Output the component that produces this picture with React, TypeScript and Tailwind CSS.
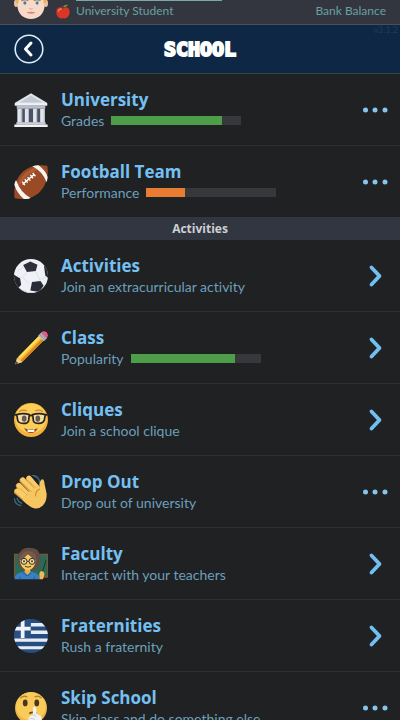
import type { ReactNode } from 'react';

function AvatarIcon() {
  return (
    <svg viewBox="0 0 100 100" className="w-[34px] h-[34px] shrink-0" aria-hidden="true">
      <ellipse cx="6" cy="54" rx="6" ry="11" fill="#eec0a6" />
      <ellipse cx="94" cy="54" rx="6" ry="11" fill="#eec0a6" />
      <path d="M7 30Q8 0 50 0T93 30L90 64Q84 99 50 100Q16 99 10 64Z" fill="#f8d9c8" />
      <path d="M5 50Q0 0 50 0T95 50L88 58Q86 38 80 24L20 24Q14 38 12 58Z" fill="#e3b45c" />
      <path d="M22 47Q32 40 42 46M58 46Q68 40 78 47" fill="none" stroke="#b98546" strokeWidth="4" />
      <ellipse cx="32" cy="53" rx="7" ry="5" fill="#fff" />
      <ellipse cx="68" cy="53" rx="7" ry="5" fill="#fff" />
      <circle cx="32" cy="53" r="5" fill="#4c7ba6" />
      <circle cx="68" cy="53" r="5" fill="#4c7ba6" />
      <path d="M45 69Q50 73 55 69" fill="none" stroke="#dba78e" strokeWidth="3" />
      <path d="M36 80Q50 77 64 80Q50 89 36 80Z" fill="#d98683" />
    </svg>
  );
}

function AppleIcon() {
  return (
    <svg viewBox="0 0 40 42" className="w-[14px] h-[15px] shrink-0" aria-hidden="true">
      <path d="M20 12C12 6 2 10 1 21C0 32 8 41 15 41Q20 39 25 41C32 41 40 31 39 21C38 10 28 6 20 12Z" fill="#da3527" />
      <path d="M7 20Q9 13 15 14" fill="none" stroke="#f5785f" strokeWidth="4" strokeLinecap="round" />
      <path d="M20 15Q20 8 17 3" fill="none" stroke="#6c4027" strokeWidth="3" />
      <path d="M20 8Q24 0 34 2Q30 10 20 8Z" fill="#6f9f35" />
    </svg>
  );
}

function BuildingIcon() {
  return (
    <svg viewBox="0 0 100 100" aria-hidden="true">
      <path d="M10 44H90V90H10Z" fill="#4c5264" />
      <path d="M3 29L50 1L97 29V37H3Z" fill="#dfe3ea" />
      <path d="M16 28L50 8L84 28Z" fill="#c3c8d3" />
      <path d="M2 30H98V37H2Z" fill="#f0f1f5" />
      <path d="M8 37H92V46H8Z" fill="#b7bdc9" />
      <path d="M10 46H24V87H10ZM32 46H44V87H32ZM56 46H68V87H56ZM77 46H91V87H77Z" fill="#e2e5ec" />
      <path d="M20 46H24V87H20ZM41 46H44V87H41ZM65 46H68V87H65ZM87 46H91V87H87Z" fill="#b4bac7" />
      <path d="M7 86H93V93H7Z" fill="#cdd1da" />
      <path d="M1 93H99V100H1Z" fill="#eff1f4" />
    </svg>
  );
}

function FootballIcon() {
  return (
    <svg viewBox="0 0 100 100" aria-hidden="true">
      <path d="M2 98C-3 65 7 38 27 19C47 1 75 -2 98 2C103 30 95 60 75 80C55 99 28 103 2 98Z" fill="#9a4a25" />
      <path d="M8 80C10 52 20 34 35 22C51 9 68 6 86 8C63 14 45 25 32 40C20 52 12 65 8 80Z" fill="#b05c33" />
      <path d="M54 4Q63 1 72 1Q94 17 99 36Q98 44 96 51Q84 19 54 4Z" fill="#f8f5f1" />
      <path d="M1 58Q2 50 6 44Q18 80 49 97Q39 101 29 100Q8 82 1 58Z" fill="#f8f5f1" />
      <path d="M25 57L60 27M24 49L32 59M32 42L40 52M40 36L48 46M48 29L56 39M55 23L63 33" fill="none" stroke="#fff" strokeWidth="4" />
    </svg>
  );
}

function SoccerIcon() {
  return (
    <svg viewBox="0 0 100 100" aria-hidden="true">
      <defs>
        <clipPath id="ball"><circle cx="50" cy="50" r="50" /></clipPath>
      </defs>
      <g clipPath="url(#ball)">
        <path d="M0 0H100V100H0Z" fill="#f0f1f7" />
        <path d="M40 36L26 54L44 72M63 34L76 60L57 72M24 54L10 55M76 60L98 52M48 70L62 84M28 24L10 35" fill="none" stroke="#d5d8e2" strokeWidth="2" />
        <path d="M27 18L48 7L69 17L64 35L38 38Z" fill="#2d2f3b" />
        <path d="M0 46L18 57L21 76L12 86L-8 70Z" fill="#22242e" />
        <path d="M53 68L78 65L87 79L74 97L48 93Z" fill="#292b37" />
        <path d="M88 19L102 28L106 62L92 48Z" fill="#252731" />
        <path d="M20 88Q43 101 69 97L60 103L20 102Z" fill="#cfd3df" />
      </g>
    </svg>
  );
}

function PencilIcon() {
  return (
    <svg viewBox="0 0 100 100" aria-hidden="true">
      <path d="M4 98L9 80L74 13L88 27L23 92Z" fill="#f9bd2e" />
      <path d="M13 76L78 10L83 15L18 81Z" fill="#ffdc62" />
      <path d="M19 87L83 22L88 27L23 92Z" fill="#da8521" />
      <path d="M9 80L4 98L23 92Q21 86 17 86Q15 80 9 80Z" fill="#f0cd99" />
      <path d="M7 89L4 98L13 95Z" fill="#45404a" />
      <path d="M71 14L81 4L98 20L88 30Z" fill="#b6bac1" />
      <path d="M75 10L92 26M79 7L95 23" stroke="#7f848c" strokeWidth="2" />
      <path d="M80 5Q87 -3 96 4Q103 12 96 21Z" fill="#e35c82" />
    </svg>
  );
}

function NerdIcon() {
  return (
    <svg viewBox="0 0 100 100" aria-hidden="true">
      <circle cx="50" cy="50" r="50" fill="#f3b03c" />
      <ellipse cx="50" cy="45" rx="46" ry="43" fill="#fbce55" />
      <path d="M16 25Q26 18 37 23M63 23Q74 18 84 25" fill="none" stroke="#c58a38" strokeWidth="3" strokeLinecap="round" />
      <path d="M9 35Q28 29 45 34L43 52Q40 61 27 60Q13 59 11 51ZM55 34Q73 29 91 35L89 51Q86 60 73 60Q60 60 57 52Z" fill="#f5dfa0" />
      <ellipse cx="30" cy="46" rx="7" ry="9" fill="#655b52" />
      <ellipse cx="70" cy="46" rx="7" ry="9" fill="#655b52" />
      <path d="M8 34Q28 29 45 34L43 52Q40 61 27 60Q13 59 11 51ZM55 34Q73 29 92 34L89 51Q86 60 73 60Q60 60 57 52ZM44 39Q50 34 56 39M2 35H10M98 35H90" fill="none" stroke="#292325" strokeWidth="5" />
      <path d="M30 74Q50 81 70 74Q64 88 50 88T30 74Z" fill="#8d4a26" />
      <path d="M40 77Q50 80 60 77V85H40Z" fill="#fff" />
    </svg>
  );
}

function WaveIcon() {
  return (
    <svg viewBox="0 0 100 100" aria-hidden="true">
      <path d="M14 32L50 69M8 49L42 78M25 16L58 52M44 11L68 40" fill="none" stroke="#d99a38" strokeWidth="17" strokeLinecap="round" />
      <path d="M15 31L50 67M10 47L42 76M26 14L59 50M44 9L69 38" fill="none" stroke="#f8cc6b" strokeWidth="14" strokeLinecap="round" />
      <path d="M26 66L66 29L76 40Q71 21 81 13Q89 11 90 27L96 55Q97 77 85 90Q74 101 59 98Q47 95 26 74Z" fill="#f6c661" />
      <path d="M18 39L40 60M29 27L52 50M47 20L63 38" fill="none" stroke="#d89c3c" strokeWidth="2" />
      <path d="M76 41Q61 48 64 63" fill="none" stroke="#c98a32" strokeWidth="3" />
      <path d="M60 2Q73 7 75 20M53 0Q59 1 63 5M1 70Q3 87 20 90M9 69Q12 79 22 83" fill="none" stroke="#326e8d" strokeWidth="4" strokeLinecap="round" />
    </svg>
  );
}

function TeacherIcon() {
  return (
    <svg viewBox="0 0 102 100" aria-hidden="true">
      <path d="M0 20H102V92H0Z" fill="#875332" />
      <path d="M3 23H99V88H3Z" fill="#276c57" />
      <path d="M12 50Q4 25 21 12Q31 0 50 3Q71 2 77 22Q84 40 74 63L58 71H26Z" fill="#654c43" />
      <path d="M1 97Q2 78 28 75L40 69L53 75Q76 78 78 97Z" fill="#397fc6" />
      <path d="M33 60H49V75L41 84L32 75Z" fill="#e5ad47" />
      <path d="M17 38Q28 31 42 22Q54 34 65 38Q64 66 42 70Q20 67 17 38Z" fill="#f7ca59" />
      <path d="M15 41Q34 35 43 17Q53 35 68 39Q68 15 43 12Q20 13 15 41Z" fill="#755a4d" />
      <circle cx="30" cy="43" r="9" fill="#e9dca8" stroke="#2d302f" strokeWidth="3" />
      <circle cx="54" cy="43" r="9" fill="#e9dca8" stroke="#2d302f" strokeWidth="3" />
      <circle cx="30" cy="43" r="3" fill="#4e352a" />
      <circle cx="54" cy="43" r="3" fill="#4e352a" />
      <path d="M39 43H45M33 58Q42 63 51 58" fill="none" stroke="#493b2b" strokeWidth="3" />
      <path d="M27 77L39 87L52 77M18 89V97M61 89V97" fill="none" stroke="#225d9e" strokeWidth="3" />
      <path d="M96 40L83 82" stroke="#1e2d2c" strokeWidth="3" />
      <path d="M77 97L76 80Q79 69 85 73Q93 76 91 84L87 97Z" fill="#f0bb50" />
    </svg>
  );
}

function GreeceIcon() {
  return (
    <svg viewBox="0 0 100 100" aria-hidden="true">
      <defs>
        <clipPath id="flag"><circle cx="50" cy="50" r="50" /></clipPath>
      </defs>
      <g clipPath="url(#flag)">
        <path d="M0 0H100V100H0Z" fill="#264d82" />
        <path d="M49 12H100V22H49ZM49 34H100V44H49ZM0 57H100V67H0ZM0 80H100V89H0Z" fill="#e8edf3" />
        <path d="M0 0H49V56H0Z" fill="#285287" />
        <path d="M20 0H31V56H20ZM0 23H49V34H0Z" fill="#f2f4f7" />
      </g>
    </svg>
  );
}

function ShushIcon() {
  return (
    <svg viewBox="0 0 100 100" aria-hidden="true">
      <circle cx="50" cy="50" r="47" fill="#f1b447" />
      <ellipse cx="50" cy="45" rx="44" ry="41" fill="#f9cb58" />
      <path d="M20 20Q28 13 38 17M62 17Q72 13 80 20" fill="none" stroke="#b88027" strokeWidth="4" strokeLinecap="round" />
      <ellipse cx="33" cy="35" rx="7" ry="10" fill="#4c3425" />
      <ellipse cx="67" cy="35" rx="7" ry="10" fill="#4c3425" />
      <path d="M45 66Q56 60 67 66" fill="none" stroke="#683e27" strokeWidth="5" />
      <path d="M56 49Q60 42 65 50L67 68L78 73Q85 80 78 92L65 100H47L42 77L55 70Z" fill="#f1f2f4" />
      <path d="M55 70L66 74M45 80L62 83M48 90L62 91" fill="none" stroke="#b5b9c2" strokeWidth="2" />
    </svg>
  );
}

interface MenuItem {
  title: string;
  detail: string;
  icon: ReactNode;
  action: 'more' | 'open';
  progress?: number;
  color?: string;
}

const enrolled: MenuItem[] = [
  { title: 'University', detail: 'Grades', icon: <BuildingIcon />, action: 'more', progress: 85, color: 'bg-[#4e9d48]' },
  { title: 'Football Team', detail: 'Performance', icon: <FootballIcon />, action: 'more', progress: 30, color: 'bg-[#e87c31]' },
];

const activities: MenuItem[] = [
  { title: 'Activities', detail: 'Join an extracurricular activity', icon: <SoccerIcon />, action: 'open' },
  { title: 'Class', detail: 'Popularity', icon: <PencilIcon />, action: 'open', progress: 80, color: 'bg-[#4e9d48]' },
  { title: 'Cliques', detail: 'Join a school clique', icon: <NerdIcon />, action: 'open' },
  { title: 'Drop Out', detail: 'Drop out of university', icon: <WaveIcon />, action: 'more' },
  { title: 'Faculty', detail: 'Interact with your teachers', icon: <TeacherIcon />, action: 'open' },
  { title: 'Fraternities', detail: 'Rush a fraternity', icon: <GreeceIcon />, action: 'open' },
  { title: 'Skip School', detail: 'Skip class and do something else', icon: <ShushIcon />, action: 'more' },
];

function ActionIcon({ action }: { action: MenuItem['action'] }) {
  return (
    <svg viewBox="0 0 28 28" className="w-7 h-7 shrink-0" aria-hidden="true">
      {action === 'more' ? (
        <g fill="#85c5ee">
          <circle cx="4.5" cy="14" r="2.5" />
          <circle cx="14" cy="14" r="2.5" />
          <circle cx="24" cy="14" r="2.5" />
        </g>
      ) : (
        <path d="M10.5 5.5L18.5 14L10.5 22.5" fill="none" stroke="#73bdf0" strokeWidth="3.8" strokeLinecap="round" strokeLinejoin="round" />
      )}
    </svg>
  );
}

function MenuRow({ item }: { item: MenuItem }) {
  return (
    <li className="border-b border-[#2c2e30] last:border-b-0">
      <button type="button" className="w-full h-[71px] flex items-center gap-[13px] pl-[14px] pr-[11px] text-left">
        <span className="w-[34px] shrink-0">{item.icon}</span>
        <span className="flex-1 min-w-0">
          <span className="block font-['Open_Sans',sans-serif] text-[17px] leading-[22px] font-bold text-[#75c0f3]">{item.title}</span>
          <span className="flex items-center gap-[7px] text-[14px] leading-[20px] text-[#6c9fbd]">
            {item.detail}
            {item.progress !== undefined && (
              <span
                role="progressbar"
                aria-label={item.detail}
                aria-valuenow={item.progress}
                className="block w-[130px] h-[9px] bg-[#37383c]"
              >
                <span className={`block h-full ${item.color}`} style={{ width: `${item.progress}%` }} />
              </span>
            )}
          </span>
        </span>
        <ActionIcon action={item.action} />
      </button>
    </li>
  );
}

export default function App() {
  return (
    <div className="h-screen overflow-hidden bg-[#1f2122] font-['Lato',sans-serif] [font-variant-ligatures:none]">
      <div className="h-[25px] overflow-hidden flex items-end bg-[#33363f] border-b border-[#4a505b] pl-[14px] pr-[14px] text-[12px] leading-[16px] text-[#68a0a2]">
        <div className="self-end pb-[5px]">
          <AvatarIcon />
        </div>
        <div className="flex-1 flex flex-col gap-[2px] pl-2 pb-[5px]">
          <div className="ml-[20px] w-[146px] h-[10px] bg-[#76a9a9]" />
          <div className="flex items-center gap-[6px]">
            <AppleIcon />
            <span>University Student</span>
          </div>
        </div>
        <span className="pb-[5px]">Bank Balance</span>
      </div>

      <header className="relative h-[49px] grid grid-cols-[30px_1fr_30px] items-center px-[14px] bg-[#0d2745] border-b border-[#39444f]">
        <button type="button" aria-label="Back" className="w-[30px] h-[30px]">
          <svg viewBox="0 0 30 30" aria-hidden="true">
            <circle cx="15" cy="15" r="13.8" fill="none" stroke="#dcecf8" strokeWidth="1.6" />
            <path d="M17 9L11.5 15L17 21" fill="none" stroke="#fff" strokeWidth="3" strokeLinecap="round" strokeLinejoin="round" />
          </svg>
        </button>
        <h1 className="text-center text-[20px] leading-[24px] font-bold text-white font-['DejaVu_Sans_Mono',monospace] [-webkit-text-stroke:2px_white]">
          SCHOOL
        </h1>
        <span className="absolute top-0 right-[2px] text-[9px] leading-[10px] text-[#1d3c5c]">v3.1.2</span>
      </header>

      <main>
        <ul>
          {enrolled.map((item) => <MenuRow key={item.title} item={item} />)}
        </ul>
        <h2 className="h-[23px] bg-[#323640] text-center font-['Open_Sans',sans-serif] text-[12px] leading-[23px] font-bold text-[#cdcfd2]">
          Activities
        </h2>
        <ul>
          {activities.map((item) => <MenuRow key={item.title} item={item} />)}
        </ul>
      </main>
    </div>
  );
}
